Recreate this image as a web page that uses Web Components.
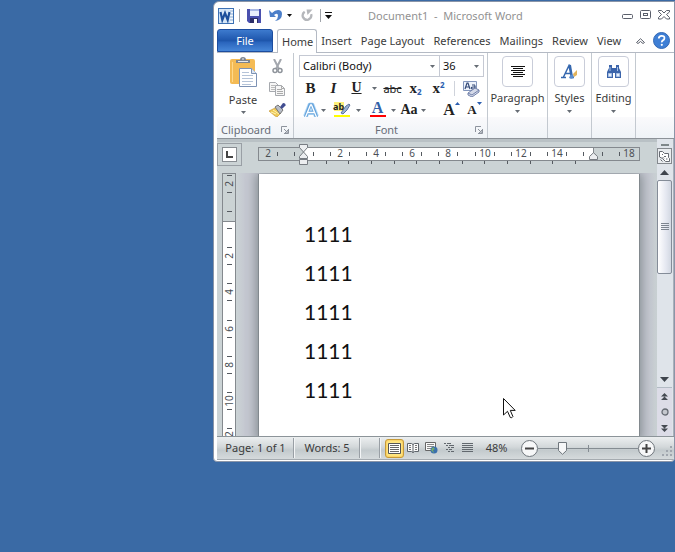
<!DOCTYPE html>
<html lang="en">
<head>
<meta charset="utf-8">
<title>Document1 - Microsoft Word</title>
<style>
  body { margin: 0; font: 11px/16px "Noto Sans", "Open Sans", sans-serif; color: #3b3b3b; }
</style>
</head>
<body>
<word-desktop>
  <word-window>
    <word-titlebar slot="title">Document1&nbsp; - &nbsp;Microsoft Word</word-titlebar>
    <word-tabs slot="tabs"></word-tabs>
    <word-ribbon slot="ribbon"></word-ribbon>
    <word-workspace slot="workspace">
      <p>1111</p><p>1111</p><p>1111</p><p>1111</p><p>1111</p>
    </word-workspace>
    <word-statusbar slot="status"></word-statusbar>
  </word-window>
</word-desktop>
<script>
const base = `
  :host, *, *::before, *::after { box-sizing: border-box; }
  button { font: inherit; color: inherit; background: none; border: 0; margin: 0; padding: 0;
           display: flex; align-items: center; justify-content: center; flex: none; }
  svg { display: block; flex: none; }
`;
function define(tag, css, html, setup) {
  const template = document.createElement('template');
  template.innerHTML = `<style>${base}${css}</style>${html}`;
  customElements.define(tag, class extends HTMLElement {
    constructor() {
      super();
      this.attachShadow({ mode: 'open' }).append(template.content.cloneNode(true));
    }
    connectedCallback() { if (setup) setup(this.shadowRoot, this); }
  });
}
const down = `<svg width="5" height="3" viewBox="0 0 5 3"><path d="M0 0h5L2.5 3z" fill="#666c74"/></svg>`;

define('word-desktop', `
  :host { display: flex; position: relative; min-height: 100vh; padding: 1px 0 90px 213px; background: #3a6aa5; }
  .pointer { position: absolute; left: 503px; top: 398px; }
`, `
  <slot></slot>
  <svg class="pointer" width="13" height="21" viewBox="0 0 13 21"><path d="M.5.5v16.5l4-3.7 2.8 6.2q1.500 1 2.600-1L7.300 12.400h4.900z" fill="#fff" stroke="#111"/></svg>
`);

define('word-window', `
  :host { display: flex; flex-direction: column; flex: 1; min-width: 0; background: #fff;
          border: 1px solid #8a95a8; border-radius: 6px 0 4px 4px;
          padding: 0 0 1px 3px; overflow: hidden; }
  ::slotted(word-workspace) { flex: 1; min-height: 0; }
`, `
  <slot name="title"></slot><slot name="tabs"></slot><slot name="ribbon"></slot>
  <slot name="workspace"></slot><slot name="status"></slot>
`);

define('word-titlebar', `
  :host { display: flex; align-items: center; height: 27px; color: #929292; }
  .quick, .controls { display: flex; align-items: center; }
  .quick { width: 119px; }
  .title { flex: 1; text-align: left; padding-left: 32px; white-space: nowrap; }
  .sep { width: 1px; height: 13px; background: #a0a4aa; }
  .controls { gap: 6px; padding: 0 4px 2px 0; }
  .controls button { width: 12px; height: 12px; }
  .app { margin: 0 5px 0 1px; }
  .save { margin-left: 7px; } .undo { margin-left: 8px; } .drop { margin-left: 5px; }
  .redo { margin: 0 7px 0 9px; } .more { margin-left: 4px; }
`, `
  <div class="quick">
    <svg class="app" width="16" height="16" viewBox="0 0 16 16"><rect x=".5" y=".5" width="15" height="15" fill="#f3f8fd" stroke="#3d71b4"/><path d="M1 1h11v14H1z" fill="#d4e5f6"/><path d="M12 3h3M12 6h3M12 9h3M12 12h3" stroke="#87a9cf"/><path d="M2.500 4l1.800 8 2.700-7 2.700 7 1.800-8" fill="none" stroke="#1c4f9c" stroke-width="2.200"/></svg>
    <span class="sep"></span>
    <button class="save" aria-label="Save"><svg width="14" height="14" viewBox="0 0 14 14"><path d="M0 0h14v14H2l-2-2z" fill="#4a50ae"/><path d="M3 0h9v7H3z" fill="#e9eefb"/><path d="M3 0h9v2H3z" fill="#a9b8e4"/><path d="M3 9h8v5H3z" fill="#2c2e69"/><path d="M7 10h3v4H7z" fill="#fff"/></svg></button>
    <button class="undo" aria-label="Undo"><svg width="13" height="13" viewBox="0 0 13 13"><path d="M0 1l1 7h6L5 6q4-3 4 1 0 3-3 5 7-1 7-7 0-4-4-4-3 0-6 3z" fill="#4c7fc9"/></svg></button>
    <button class="drop" aria-label="Undo history"><svg width="5" height="3"><path d="M0 0h5L2.500 3z" fill="#111"/></svg></button>
    <button class="redo" aria-label="Repeat"><svg width="12" height="13" viewBox="0 0 13 13"><path d="M4 2.500Q1 4.500 2 8q2 4 6 3 4-2 3-6" fill="none" stroke="#b5b7bb" stroke-width="2.500"/><path d="M6 0h6.500L7 6z" fill="#b5b7bb"/></svg></button>
    <span class="sep"></span>
    <button class="more" aria-label="Customize Quick Access Toolbar"><svg width="7" height="7"><path d="M0 0h7v1H0zM0 3h7L3.500 7z" fill="#111"/></svg></button>
  </div>
  <span class="title"><slot></slot></span>
  <div class="controls">
    <button aria-label="Minimize"><svg width="12" height="12"><rect x=".5" y="5.500" width="10" height="4" rx="1" fill="#fff" stroke="#5a5f6b"/></svg></button>
    <button aria-label="Maximize"><svg width="12" height="12"><rect x=".5" y="1.500" width="10" height="8" rx="1" fill="#fff" stroke="#5a5f6b"/><rect x="3.500" y="4.500" width="4" height="2" fill="none" stroke="#5a5f6b"/></svg></button>
    <button aria-label="Close"><svg width="12" height="12"><path d="M.5 1.500h3l2.500 2.500 2.500-2.500h3v1.500L8.500 5.500l3 3v1.500h-3L6 7.500 3.500 10h-3V8.500l3-3-3-3z" fill="#fff" stroke="#5a5f6b"/></svg></button>
  </div>
`);

define('word-tabs', `
  :host { display: flex; height: 23px; align-items: stretch; }
  button { white-space: nowrap; }
  .file { width: 56px; color: #fff; border-radius: 3px 3px 0 0; border: 1px solid #1c4d9f; margin-right: 4px;
          background: linear-gradient(#3d7ace, #1e56ac 50%, #2b66be 60%, #4686d8); }
  .home { border: 1px solid #b4bac4; border-bottom: 0; border-radius: 3px 3px 0 0; background: #fff;
          padding: 0 3px 0 4px; position: relative; z-index: 1; margin-bottom: -1px; }
  .rest { display: flex; }
  .rest button { padding: 0 5px 0 4px; }
  .tools { display: flex; align-items: center; gap: 8px; margin-left: auto; padding-right: 4px; }
`, `
  <button class="file">File</button>
  <button class="home">Home</button>
  <div class="rest">
    <button>Insert</button><button>Page Layout</button><button>References</button>
    <button>Mailings</button><button>Review</button><button>View</button>
  </div>
  <div class="tools">
    <button aria-label="Minimize the Ribbon"><svg width="9" height="6"><path d="M.5 4.500L4.500.7l4 3.800-1.500 1-2.500-2-2.500 2z" fill="#fff" stroke="#5a5f6b"/></svg></button>
    <button aria-label="Help"><svg width="17" height="17"><circle cx="8.500" cy="8.500" r="8" fill="#3f7fd5" stroke="#3469b5"/><path d="M5.800 6.500q0-2.700 2.900-2.700t2.700 2.500q0 1.300-1.500 2.100-1.200.7-1.100 2" fill="none" stroke="#fff" stroke-width="1.800"/><circle cx="8.800" cy="12.800" r="1.100" fill="#fff"/></svg></button>
  </div>
`);

define('ribbon-group', `
  :host { display: flex; flex-direction: column; height: 85px; border-right: 1px solid #c3c9d0; flex: none; }
  .body { height: 64px; }
  .foot { height: 21px; display: flex; align-items: center; color: #686d78; padding: 4px 4px 0;
          background: linear-gradient(#fafafc, #eff3f7); }
  .name { flex: 1; text-align: center; }
  :host([start]) .name { text-align: left; }
`, `
  <div class="body"><slot></slot></div>
  <div class="foot"><span class="name"></span></div>
`, (root, el) => {
  const name = el.getAttribute('name');
  root.querySelector('.name').textContent = name || '';
  if (name) {
    const b = document.createElement('button');
    b.setAttribute('aria-label', name + ' settings');
    b.innerHTML = `<svg width="8" height="8"><path d="M.5 6V.5H6M3 3l2 2M7.500 3v4.500H3M7 4v3H4z" fill="none" stroke="#8d939d"/></svg>`;
    root.querySelector('.foot').append(b);
  }
});

define('ribbon-menu', `
  :host { display: block; }
  button { flex-direction: column; width: 100%; height: 64px; justify-content: flex-start; padding-top: 3px; }
  .tile { width: 31px; height: 31px; border: 1px solid #c9cdd9; border-radius: 4px; display: grid; place-items: center; margin-bottom: 3px; }
  .text { margin-bottom: 4px; }
`, `<button><span class="tile"><slot></slot></span><span class="text"><slot name="text"></slot></span>${down}</button>`);

define('word-ribbon', `
  :host { display: flex; height: 86px; border-top: 1px solid #b4bac4; background: #fff; }
  .clip { display: grid; grid-template-columns: 48px 20px; padding: 4px 0 0 2px; }
  .paste { flex-direction: column; width: 48px; height: 57px; justify-content: space-between; }
  .small { display: flex; flex-direction: column; gap: 5px; padding-top: 1px; align-items: center; }
  .small button { height: 17px; width: 20px; }
  .font { width: 194px; }
  .pad { padding: 2px 4px 0 5px; }
  .combos, .row { display: flex; }
  .combo { position: relative; display: block; height: 22px; border: 1px solid #c5c9d3; flex: none; }
  .combo + .combo { border-left: 0; width: 44px; } .combo:first-child { width: 141px; }
  .combo svg { position: absolute; right: 4px; top: 9px; pointer-events: none; }
  select { appearance: none; width: 100%; height: 20px; border: 0; background: none; color: #111; font: inherit; padding: 0 0 0 3px; }
  .row { height: 22px; align-items: center; font-family: "Liberation Serif", serif; font-weight: bold; color: #222; }
  .row button { width: 23px; height: 22px; }
  .row .arr { width: 8px; }
  .b { font-size: 15px; } .i { font-style: italic; font-size: 15px; } .u { font-size: 14px; text-decoration: underline; }
  .sep { width: 1px; height: 15px; background: #cfd3db; margin: 0 4px 0 3px; }
  .s { font: 11px "Noto Sans", sans-serif; text-decoration: line-through; }
  .script { font-size: 15px; }
  .num { font: bold 8px/8px "Noto Sans", sans-serif; color: #2b5eb0; align-self: flex-end; margin-bottom: 3px; }
  .num.up { align-self: flex-start; margin: 4px 0 0; }
  .row .a, .row .aa { width: 20px; } .row .a { justify-content: flex-end; }
  .row .hl { margin-left: 3px; width: 24px; } .row .fc { margin-left: 4px; }
  .row .aa { margin-left: 2px; font-size: 14px; }
  .fc span { display: grid; place-items: center; line-height: 12px; font-size: 16px; color: #3261a8; border-bottom: 4px solid #f00; width: 16px; height: 17px; }
  .hl svg { overflow: visible; }
  .grow { font-size: 16px; } .shrink { font-size: 13px; }
  .grow svg, .shrink svg { align-self: flex-start; margin-top: 3px; }
  ribbon-menu { font-family: "Noto Sans", sans-serif; }
  .para { width: 60px; } .menu { width: 44px; } .fill { flex: 1; border: 0; }
`, `
  <ribbon-group name="Clipboard" start style="width:77px">
    <div class="clip">
      <button class="paste">
        <svg width="27" height="31" viewBox="0 0 27 31"><path d="M0 4q0-2 2-2h21q2 0 2 2v23H2q-2 0-2-2z" fill="#f4bb55"/><path d="M2.500 5v20" stroke="#ffd98a"/><path d="M6 6V3h4q0-3 3-3t3 3h4v3z" fill="#7e858f"/><path d="M8 4h10v1H8zM12 1.500h2v1h-2z" fill="#e7eaef"/><path d="M9.500 11.500h12l5 5v13h-17z" fill="#fff" stroke="#7d92b4"/><path d="M21.500 11.500v5h5" fill="#dce6f3" stroke="#7d92b4"/><path d="M12 15.500h7M12 18.500h11M12 21.500h11M12 24.500h11M12 27.500h9" stroke="#b4c3d8"/></svg>
        <span>Paste</span>${down}
      </button>
      <div class="small">
        <button aria-label="Cut"><svg width="11" height="15" viewBox="0 0 11 15"><path d="M2 0l5 10M9 0L4 10" stroke="#a3a7ae" stroke-width="2" fill="none"/><circle cx="3" cy="11.500" r="2" fill="none" stroke="#8f949b" stroke-width="1.500"/><circle cx="8" cy="11.500" r="2" fill="none" stroke="#8f949b" stroke-width="1.500"/></svg></button>
        <button aria-label="Copy"><svg width="16" height="14" viewBox="0 0 16 14"><path d="M.5.500h6l3 3v6h-9z" fill="#f6f6f6" stroke="#a6a9ae"/><path d="M2 3.500h4M2 5.500h5M2 7.500h5" stroke="#bbb"/><path d="M6.500 3.500h6l3 3v7h-9z" fill="#f6f6f6" stroke="#a6a9ae"/><path d="M12.500 3.500v3h3M8 7.500h5M8 9.500h6M8 11.500h6" stroke="#aaa" fill="none"/></svg></button>
        <button aria-label="Format Painter"><svg width="17" height="15" viewBox="0 0 17 15"><path d="M0 8l6-3 6 5-4 4-2-1z" fill="#eec956" stroke="#c18f2d" stroke-width=".6"/><path d="M2 9l5 2M4 7l6 4" stroke="#fff3b0"/><path d="M6 4l3-2 5 5-3 4z" fill="#b8bdc6" stroke="#777"/><path d="M11 4l3-4q3 0 2.500 2.500L13 6z" fill="#414d91"/></svg></button>
      </div>
    </div>
  </ribbon-group>
  <ribbon-group name="Font" class="font">
    <div class="pad">
      <div class="combos">
        <label class="combo"><select aria-label="Font"><option>Calibri (Body)</option></select>${down}</label>
        <label class="combo"><select aria-label="Font size"><option>36</option></select>${down}</label>
      </div>
      <div class="row">
        <button class="b">B</button><button class="i">I</button><button class="u">U</button>
        <button class="arr" aria-label="Underline style" style="margin:0 3px 0 2px">${down}</button>
        <button class="s">abc</button>
        <button class="script" aria-label="Subscript">x<span class="num">2</span></button>
        <button class="script" aria-label="Superscript">x<span class="num up">2</span></button>
        <span class="sep" style="margin:0 4px"></span>
        <button aria-label="Clear Formatting"><svg width="18" height="17" viewBox="0 0 18 17"><path d="M1.500 1.500h13v9h-13z" fill="#eef3fb" stroke="#8497bd"/><path d="M3 9l2-6h1l2 6M4 7h3M13 5.500v3.500h-3q-1.500-2 1-2h2M10 5h3" stroke="#344a78" fill="none" stroke-width="1.200"/><path d="M6 13l7-5 4 2v2l-7 5-4-2z" fill="#d5dae9" stroke="#7382ab"/><path d="M6 13l4 2 7-5" fill="none" stroke="#7382ab"/></svg></button>
      </div>
      <div class="row">
        <button class="a" aria-label="Text Effects"><svg width="16" height="17" viewBox="0 0 16 17"><path d="M2.500 14.500L7 3h2l4.500 11.500M4.500 10.500h7" fill="none" stroke="#b9dbf6" stroke-width="5" stroke-linejoin="round"/><path d="M2.500 15L7 3h2l4.500 12M4.500 10.500h7" fill="none" stroke="#64a3dc" stroke-width="3.400"/><path d="M2.500 15L7.500 3h1l5 12M4.500 10.500h7" fill="none" stroke="#fff" stroke-width="1.300"/></svg></button>
        <button class="arr" aria-label="Text effect styles">${down}</button>
        <button class="hl" aria-label="Text Highlight Color"><svg width="18" height="17" viewBox="0 0 18 17"><path d="M1 0h10v9H1z" fill="#fff17a"/><path d="M1 13h16v4H1z" fill="#ff0"/><text x="0" y="8" font-family="Noto Sans, sans-serif" font-size="9" fill="#222">ab</text><path d="M8 11l5-7 3-2 1 1-3 5-4 4z" fill="#9cb3d3" stroke="#405d8a" stroke-width=".8"/></svg></button>
        <button class="arr" aria-label="Highlight colors">${down}</button>
        <button class="fc" aria-label="Font Color"><span>A</span></button>
        <button class="arr" aria-label="Font colors">${down}</button>
        <button class="aa">Aa</button>
        <button class="arr" aria-label="Change case options">${down}</button>
        <span class="sep" style="margin:0 5px 0 8px"></span>
        <button class="grow" aria-label="Grow Font">A<svg width="5" height="3"><path d="M0 3L2.500 0 5 3z" fill="#2b5eb0"/></svg></button>
        <button class="shrink" aria-label="Shrink Font">A<svg width="5" height="3"><path d="M0 0h5L2.500 3z" fill="#2b5eb0"/></svg></button>
      </div>
    </div>
  </ribbon-group>
  <ribbon-group class="para"><ribbon-menu>
    <svg width="14" height="12"><path d="M0 .5h14M2 2.500h10M0 4.500h14M2 6.500h10M0 8.500h14M2 10.500h10" stroke="#111"/></svg><span slot="text">Paragraph</span></ribbon-menu></ribbon-group>
  <ribbon-group class="menu"><ribbon-menu>
    <svg width="17" height="16" viewBox="0 0 17 16"><path d="M0 13.500h5M9 13.500h4M2.500 13L8 1.500l2.500 12M4.500 9.500h5" stroke="#3567ae" stroke-width="1.500" fill="none"/><path d="M9 1l2 12" stroke="#3567ae" stroke-width="2"/><path d="M8 14q1-4 4-3.500l1 2Q12 16 8 14z" fill="#5b8ed0"/><path d="M12 10l4-4v5l-3 2z" fill="#e3b45b"/></svg><span slot="text">Styles</span></ribbon-menu></ribbon-group>
  <ribbon-group class="menu"><ribbon-menu>
    <svg width="16" height="14" viewBox="0 0 16 14"><path d="M3 0h3v3h4V0h3v3l2 4v6H9V8H7v5H1V7l2-4z" fill="#3b64aa"/><path d="M2.500 8.500h3v3h-3zM10.500 8.500h3v3h-3zM4 2v4M11.500 2v4" fill="#e6effb" stroke="#a8c1e6"/></svg><span slot="text">Editing</span></ribbon-menu></ribbon-group>
  <ribbon-group class="fill"></ribbon-group>
`);

define('word-ruler', `
  :host { display: flex; flex: 1; height: 14px; border: 1px solid #84898e; background: #fff; position: relative; min-width: 0; }
  .l, .r { width: 45px; background: #cbd3d4; } .r { width: 46px; border-left: 1px solid #84898e; } .m { flex: 1; }
  .ticks { position: absolute; inset: 0; overflow: visible; }
  .marks { position: absolute; left: 40px; top: -4px; }
  .right { position: absolute; right: 41px; top: 4px; }
  .stops { position: absolute; left: 0; top: 13px; }
  text { font-size: 10px; fill: #4b4f55; }
`, `
  <div class="l"></div><div class="m"></div><div class="r"></div>
  <svg class="ticks" width="100%" height="12"></svg>
  <svg class="stops" width="340" height="4"></svg>
  <svg class="marks" width="10" height="22" viewBox="0 0 10 22"><path d="M.5.500h8v3l-4 4.500 4 4.500v2h-8v-2l4-4.500-4-4.500z" fill="#eceef0" stroke="#777c82"/><path d="M.5 15.500h8v5h-8z" fill="#eceef0" stroke="#777c82"/></svg>
  <svg class="right" width="9" height="9"><path d="M4.500.7l4 3.800v3h-8v-3z" fill="#eceef0" stroke="#777c82"/></svg>
`, root => {
  let s = '', t = '';
  for (let n = -2; n <= 18; n += 2) {
    const x = 45 + Math.round(n * 18.05);
    if (n && n !== 16) s += `<text x="${x}" y="9" text-anchor="middle">${Math.abs(n)}</text>`;
    const a = x - 10, b = x + 9;
    if (a > 0) s += `<path d="M${a}.5 4v4" stroke="#555a60"/>`;
    if (n < 18) s += `<path d="M${b}.5 4v4" stroke="#555a60"/>`;
  }
  for (let i = 1; i <= 12; i++) t += `<path d="M${44 + Math.round(i * 22.65)}.5 0v3" stroke="#555a60"/>`;
  root.querySelector('.ticks').innerHTML = s;
  root.querySelector('.stops').innerHTML = t;
});

define('word-vruler', `
  :host { display: flex; flex-direction: column; width: 14px; border: 1px solid #84898e; border-bottom: 0; background: #fff; position: relative; }
  .top { height: 48px; background: #cbd3d4; border-bottom: 1px solid #84898e; }
  svg { position: absolute; left: 0; top: 0; overflow: visible; }
  text { font-size: 10px; fill: #4b4f55; }
`, `<div class="top"></div><svg width="12" height="100%"></svg>`, root => {
  let s = '';
  for (let n = -2; n <= 12; n += 2) {
    const y = 46 + Math.round(n * 18.1);
    if (n) s += `<text transform="translate(10 ${y}) rotate(-90)" text-anchor="middle">${Math.abs(n)}</text>`;
    for (const t of [y - 9, y + 8]) if (t > 0 && t < 260) s += `<path d="M4 ${t}.5h5" stroke="#555a60"/>`;
  }
  root.querySelector('svg').innerHTML = s;
});

define('word-scrollbar', `
  :host { display: flex; flex-direction: column; width: 17px; align-items: center; background: #dfe4ea; padding-right: 1px; border-right: 1px solid #aab0ba; }
  .split { width: 8px; height: 2px; margin: 5px 0 2px; background: #7e878a; flex: none; }
  .rul { width: 15px; height: 16px; border: 1px solid #84898e; background: #e9ecef; }
  .step { width: 15px; height: 16px; }
  .track { flex: 1; width: 15px; }
  .thumb { height: 94px; width: 15px; border: 1px solid #848c98; border-radius: 2px; background: linear-gradient(90deg, #fff, #e5e8f1 60%, #d2d8e2); }
  .browse { width: 15px; display: flex; flex-direction: column; align-items: center; border-top: 1px solid #b2bbc4; background: #dcdce7; }
  .browse button { width: 15px; height: 16px; }
`, `
  <div class="split"></div>
  <button class="rul" aria-label="View Ruler"><svg width="13" height="13" viewBox="0 0 13 13"><path d="M1.500 1.500h3l2 2h4v4l1 1v3h-4l-3-3-3-1.500z" fill="#fff" stroke="#666b72"/><path d="M4 4.500h1M6 6.500h2M4.500 7l1.500 1.500M8 9h1.500M2.500 9.500l2 2" stroke="#666b72" fill="none"/></svg></button>
  <button class="step" aria-label="Scroll up"><svg width="9" height="5"><path d="M0 5l4.500-5L9 5z" fill="#3f454d"/></svg></button>
  <div class="track"><button class="thumb" aria-label="Scroll position"><svg width="8" height="8"><path d="M0 .5h8M0 2.500h8M0 4.500h8M0 6.500h8" stroke="#7d8590"/></svg></button></div>
  <button class="step" aria-label="Scroll down"><svg width="9" height="5"><path d="M0 0h9L4.500 5z" fill="#3f454d"/></svg></button>
  <div class="browse">
    <button aria-label="Previous page"><svg width="7" height="7"><path d="M0 3.500L3.500 0 7 3.500zM0 7l3.500-3.500L7 7z" fill="#454a52"/></svg></button>
    <button aria-label="Select browse object"><svg width="8" height="8"><circle cx="4" cy="4" r="3" fill="#c5c8cf" stroke="#666b74" stroke-width="1.300"/></svg></button>
    <button aria-label="Next page"><svg width="7" height="7"><path d="M0 0h7L3.500 3.500zM0 3.500h7L3.500 7z" fill="#454a52"/></svg></button>
  </div>
`);

define('word-workspace', `
  :host { display: flex; border-top: 1px solid #8c9298; background: #cbd3d5; }
  .main { flex: 1; display: flex; flex-direction: column; min-width: 0; box-shadow: inset 0 3px 0 #b9c1c5; }
  .rulers { height: 34px; display: flex; padding: 4px 17px 0 0; flex: none; }
  .corner { width: 25px; height: 23px; border: 1px solid #999fa5; display: grid; place-items: center; margin-right: 16px; }
  .corner button { width: 15px; height: 15px; border: 1px solid #888d92; background: #fff; }
  word-ruler { margin-top: 4px; }
  .area { flex: 1; display: flex; min-height: 0; overflow: hidden; padding-left: 5px; }
  .stage { flex: 1; display: flex; padding: 1px 18px 0 23px; background: linear-gradient(90deg, #cbd3d5, #c5c8d1 9px, #c5c8d1 98%, #c8d0d2); overflow: hidden; min-width: 0; }
  .page { flex: 1; min-width: 0; background: #fff; box-shadow: -1px 0 0 #82898e, 1px 0 0 #82898e, 0 2px 10px 3px #858d92; padding: 40px 45px 0; outline: none;
          color: #111; font: 21px/39px Lato, sans-serif; }
  ::slotted(p) { margin: 0; }
`, `
  <div class="main">
    <div class="rulers">
      <div class="corner"><button aria-label="Tab stop: left"><svg width="7" height="7"><path d="M1 0v6h6" fill="none" stroke="#444" stroke-width="2"/></svg></button></div>
      <word-ruler></word-ruler>
    </div>
    <div class="area">
      <word-vruler></word-vruler>
      <div class="stage"><div class="page" role="textbox" aria-label="Document" contenteditable="true" spellcheck="false"><slot></slot></div></div>
    </div>
  </div>
  <word-scrollbar></word-scrollbar>
`);

define('word-statusbar', `
  :host { display: flex; position: relative; height: 24px; align-items: center; border-top: 1px solid #8c9499; border-bottom: 1px solid #a5abb0; white-space: nowrap;
          background: linear-gradient(#eceff0, #d3d8da 45%, #c3cacd 60%, #d5dadc); padding-left: 1px; }
  button { height: 20px; }
  .page { width: 75px; } .words { width: 64px; }
  .sep { width: 2px; height: 20px; border-left: 1px solid #999fa5; background: #f3f5f6; flex: none; }
  .views { display: flex; align-items: center; }
  .views button { width: 18px; height: 18px; }
  .views .on { width: 19px; height: 19px; border: 1px solid #c69a39; border-radius: 3px; background: #ffe680; box-shadow: inset 0 0 2px #f0a830; }
  .pct { width: 41px; }
  .zoom { flex: 1; display: flex; align-items: center; min-width: 0; padding-left: 4px; }
  .round { width: 17px; height: 17px; border-radius: 50%; border: 1px solid #6f767c; background: #f6f7f8; }
  input { appearance: none; flex: 1; min-width: 0; height: 20px; margin: 0;
          background: linear-gradient(#858c92, #858c92) center / 100% 1px no-repeat, linear-gradient(#858c92, #858c92) center / 1px 7px no-repeat; }
  input::-webkit-slider-thumb { appearance: none; width: 9px; height: 13px;
     background: url("data:image/svg+xml,%3Csvg xmlns='http://www.w3.org/2000/svg' width='9' height='13'%3E%3Cpath d='M.5.500h8v8l-4 3.800-4-3.800z' fill='%23f5f6f7' stroke='%236f767c'/%3E%3C/svg%3E"); }
  .grip { align-self: flex-end; margin: 0 1px 2px 7px; }
`, `
  <button class="page">Page: 1 of 1</button><span class="sep"></span>
  <button class="words">Words: 5</button><span class="sep" style="margin-right:18px"></span><span class="sep" style="margin-right:4px"></span>
  <div class="views">
    <button class="on" aria-label="Print Layout"><svg width="13" height="11"><path d="M.5.500h12v10H.5z" fill="#fff" stroke="#555"/><path d="M2 2.500h9M2 4.500h9M2 6.500h9M2 8.500h9" stroke="#666"/></svg></button>
    <button aria-label="Full Screen Reading"><svg width="12" height="12" viewBox="0 0 12 12"><path d="M.5 1.500h4l1.500 1 1.500-1h4v8h-4l-1.500 1-1.500-1h-4zM6 2v9" fill="#fafafa" stroke="#5e646b"/><path d="M2 3.500h2M2 5.500h2M2 7.500h2M8 3.500h2M8 5.500h2M8 7.500h2" stroke="#777"/></svg></button>
    <button aria-label="Web Layout"><svg width="13" height="12" viewBox="0 0 13 12"><path d="M.5.500h10v8H.5z" fill="#fafafa" stroke="#666"/><path d="M2 2.500h7M2 4.500h7M2 6.500h4" stroke="#888"/><circle cx="9" cy="8" r="3.500" fill="#3a70ad"/><path d="M8 5l2 2-2 1 1 3-3-3z" fill="#77ad6b"/></svg></button>
    <button aria-label="Outline"><svg width="10" height="10"><path d="M0 .5h7M2 2.500h8M4 4.500h6M2 6.500h6M4 8.500h6" stroke="#62686e" stroke-dasharray="2 1 8"/></svg></button>
    <button aria-label="Draft"><svg width="11" height="10"><path d="M0 .5h11M0 2.500h11M0 4.500h11M0 6.500h11M0 8.500h11" stroke="#62686e"/></svg></button>
  </div>
  <button class="pct">48%</button>
  <div class="zoom">
    <button class="round" aria-label="Zoom Out"><svg width="9" height="9"><path d="M0 4.500h9" stroke="#444" stroke-width="2"/></svg></button>
    <input type="range" min="0" max="100" value="22" aria-label="Zoom">
    <button class="round" aria-label="Zoom In"><svg width="9" height="9"><path d="M0 4.500h9M4.500 0v9" stroke="#444" stroke-width="2"/></svg></button>
  </div>
  <svg class="grip" width="11" height="11"><path d="M8 0h2v2H8zM8 4h2v2H8zM4 4h2v2H4zM8 8h2v2H8zM4 8h2v2H4zM0 8h2v2H0z" fill="#a0a6ae"/></svg>
`);
</script>
</body>
</html>
